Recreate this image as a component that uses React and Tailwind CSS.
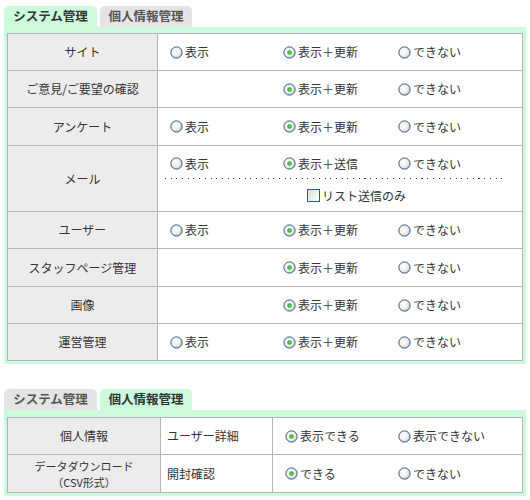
import React from "react";

const FONT = { fontFamily: '"Noto Sans CJK JP", "Noto Sans", sans-serif' };

function Radio({ checked }) {
  return (
    <svg width="13" height="13" viewBox="0 0 13 13" className="shrink-0">
      <defs>
        <radialGradient id={checked ? "rgc" : "rgu"} cx="40%" cy="40%" r="65%">
          <stop offset="0" stopColor="#ffffff" />
          <stop offset="0.6" stopColor="#eeeeea" />
          <stop offset="1" stopColor="#c8c8c0" />
        </radialGradient>
      </defs>
      <circle cx="6.5" cy="6.5" r="5.6" fill={`url(#${checked ? "rgc" : "rgu"})`} stroke="#2c5a8a" strokeWidth="1" />
      {checked && <circle cx="6.5" cy="6.5" r="2.3" fill="#2fae2f" />}
      {checked && <circle cx="6.5" cy="6.5" r="1" fill="#7ee07e" />}
    </svg>
  );
}

function Opt({ label, checked, w }) {
  return (
    <div className={`flex items-center gap-[2px] ${w}`}>
      {label !== null && (
        <>
          <Radio checked={checked} />
          <span>{label}</span>
        </>
      )}
    </div>
  );
}

function Tabs({ active }) {
  const on = "bg-[#ccfadb] text-[#333]";
  const off = "bg-[#e4e4e4] text-[#555]";
  return (
    <div className="flex gap-[3px] h-[21px]">
      <div className={`w-[93px] rounded-t-[5px] flex items-center justify-center font-bold text-[12.5px] ${active === 0 ? on : off}`}>
        システム管理
      </div>
      <div className={`w-[92px] rounded-t-[5px] flex items-center justify-center font-bold text-[12.5px] ${active === 1 ? on : off}`}>
        個人情報管理
      </div>
    </div>
  );
}

const rows1 = [
  { label: "サイト", h: "h-[37px]", show: true },
  { label: "ご意見/ご要望の確認", h: "h-[37px]", show: false },
  { label: "アンケート", h: "h-[38px]", show: true },
  { label: "メール", h: "h-[66px]", mail: true },
  { label: "ユーザー", h: "h-[37px]", show: true },
  { label: "スタッフページ管理", h: "h-[38px]", show: false },
  { label: "画像", h: "h-[37px]", show: false },
  { label: "運営管理", h: "h-[37px]", show: true },
];

export default function App() {
  return (
    <div className="bg-white w-[530px] h-[500px] pl-[4px] pt-[6px] text-[12px] text-[#333]" style={FONT}>
      <Tabs active={0} />
      <div className="w-[522px] bg-[#ccfadb] px-[3px] pt-[6px] pb-[3px]">
        <table className="table-fixed border-collapse w-[516px] bg-white">
          <colgroup>
            <col className="w-[150px]" />
            <col />
          </colgroup>
          <tbody>
            {rows1.map((r) => (
              <tr key={r.label}>
                <td className={`${r.h} border border-[#b4b4b4] bg-[#ececec] text-center align-middle p-0`}>
                  {r.label}
                </td>
                <td className={`${r.h} border border-[#b4b4b4] p-0 align-middle`}>
                  {r.mail ? (
                    <div className="flex flex-col">
                      <div className="flex items-center pl-[12px] h-[20px]">
                        <Opt label="表示" w="w-[113px]" />
                        <Opt label="表示＋送信" checked w="w-[115px]" />
                        <Opt label="できない" w="w-[100px]" />
                      </div>
                      <div className="ml-[7px] mr-[16px] mt-[4px] h-[1px] bg-[repeating-linear-gradient(to_right,#1e3a70_0_1px,transparent_1px_5.7px)]" />
                      <div className="flex items-center pl-[149px] mt-[9px] h-[16px]">
                        <span className="w-[13px] h-[13px] border border-[#2c5a8a] bg-gradient-to-br from-[#dcdcd6] to-white shrink-0" />
                        <span className="ml-[2px]">リスト送信のみ</span>
                      </div>
                    </div>
                  ) : (
                    <div className="flex items-center pl-[12px]">
                      <Opt label={r.show ? "表示" : null} w="w-[113px]" />
                      <Opt label="表示＋更新" checked w="w-[115px]" />
                      <Opt label="できない" w="w-[100px]" />
                    </div>
                  )}
                </td>
              </tr>
            ))}
          </tbody>
        </table>
      </div>

      <div className="mt-[25px]">
        <Tabs active={1} />
        <div className="w-[522px] bg-[#ccfadb] px-[3px] pt-[7px] pb-[3px]">
          <table className="table-fixed border-collapse w-[516px] bg-white">
            <colgroup>
              <col className="w-[153px]" />
              <col className="w-[112px]" />
              <col />
            </colgroup>
            <tbody>
              <tr>
                <td className="h-[37px] border border-[#b4b4b4] bg-[#ececec] text-center p-0">個人情報</td>
                <td className="h-[37px] border border-[#b4b4b4] p-0 pl-[6px]">ユーザー詳細</td>
                <td className="h-[37px] border border-[#b4b4b4] p-0">
                  <div className="flex items-center pl-[12px]">
                    <Opt label="表示できる" checked w="w-[113px]" />
                    <Opt label="表示できない" w="w-[110px]" />
                  </div>
                </td>
              </tr>
              <tr>
                <td className="h-[38px] border border-[#b4b4b4] bg-[#ececec] text-center p-0 leading-[16px] text-[11px]">
                  <div>データダウンロード</div>
                  <div>（CSV形式）</div>
                </td>
                <td className="h-[38px] border border-[#b4b4b4] p-0 pl-[6px]">開封確認</td>
                <td className="h-[38px] border border-[#b4b4b4] p-0">
                  <div className="flex items-center pl-[12px]">
                    <Opt label="できる" checked w="w-[113px]" />
                    <Opt label="できない" w="w-[110px]" />
                  </div>
                </td>
              </tr>
            </tbody>
          </table>
        </div>
      </div>
    </div>
  );
}
